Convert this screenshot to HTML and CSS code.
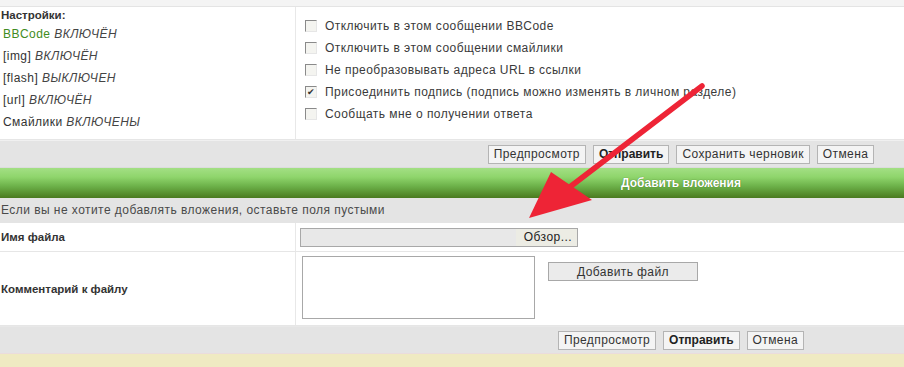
FILE: index.html
```html
<!DOCTYPE html>
<html>
<head>
  <title>Ответить</title>
  <link rel="stylesheet" href="styles.css">
</head>
<body>
  <div class="page">
    <div class="top-strip"></div>

    <div class="row settings-row">
      <div class="cell-left">
        <div class="settings-title">Настройки:</div>
        <div class="settings-line"><span class="green">BBCode</span> <i>ВКЛЮЧЁН</i></div>
        <div class="settings-line">[img] <i>ВКЛЮЧЁН</i></div>
        <div class="settings-line">[flash] <i>ВЫКЛЮЧЕН</i></div>
        <div class="settings-line">[url] <i>ВКЛЮЧЁН</i></div>
        <div class="settings-line">Смайлики <i>ВКЛЮЧЕНЫ</i></div>
      </div>
      <div class="cell-right options">
        <label class="option"><span class="check"></span>Отключить в этом сообщении BBCode</label>
        <label class="option"><span class="check"></span>Отключить в этом сообщении смайлики</label>
        <label class="option"><span class="check"></span>Не преобразовывать адреса URL в ссылки</label>
        <label class="option"><span class="check checked">&#10004;</span>Присоединить подпись (подпись можно изменять в личном разделе)</label>
        <label class="option"><span class="check"></span>Сообщать мне о получении ответа</label>
      </div>
    </div>

    <div class="bar">
      <button class="btn">Предпросмотр</button>
      <button class="btn btn-main">Отправить</button>
      <button class="btn">Сохранить черновик</button>
      <button class="btn">Отмена</button>
    </div>

    <div class="cat-head">Добавить вложения</div>

    <div class="info">Если вы не хотите добавлять вложения, оставьте поля пустыми</div>

    <div class="row file-row">
      <div class="cell-left label">Имя файла</div>
      <div class="cell-right">
        <div class="file-input"><span class="file-path"></span><span class="file-browse">Обзор...</span></div>
      </div>
    </div>

    <div class="row comment-row">
      <div class="cell-left label">Комментарий к файлу</div>
      <div class="cell-right comment-cell">
        <textarea class="comment"></textarea>
        <button class="btn btn-add">Добавить файл</button>
      </div>
    </div>

    <div class="bar bar-bottom">
      <button class="btn">Предпросмотр</button>
      <button class="btn btn-main">Отправить</button>
      <button class="btn">Отмена</button>
    </div>

    <div class="bottom-strip"></div>
  </div>

  <svg class="arrow" width="904" height="367" viewBox="0 0 904 367">
    <line x1="702" y1="86" x2="562" y2="193" stroke="#ee2436" stroke-width="5.5" stroke-linecap="round"/>
    <polygon points="529,218 551,172 592,200" fill="#ee2436"/>
  </svg>
</body>
</html>
```

FILE: styles.css
```css
html, body {
  margin: 0;
  overflow: hidden;
}
body {
  font-family: "Liberation Sans", Arial, sans-serif;
  font-size: 12px;
  letter-spacing: 0.45px;
  color: #333;
  background: #fff;
  position: relative;
}
.page {
  width: 1362px;
}
.top-strip {
  height: 6px;
  background: #f4f4f4;
  border-bottom: 1px solid #e4e4e4;
}
.row {
  display: flex;
  border-bottom: 1px solid #e6e6e6;
}
.cell-left {
  width: 296px;
  border-right: 1px solid #e8e8e8;
  box-sizing: border-box;
}
.cell-right {
  flex: 1;
  padding-left: 4px;
}

/* settings */
.settings-row {
  height: 132px;
}
.settings-title {
  font-weight: bold;
  letter-spacing: 0;
  font-size: 11.5px;
  line-height: 16px;
  padding-left: 1px;
}
.settings-line {
  line-height: 22px;
  padding-left: 3px;
}
.settings-line i {
  color: #444;
}
.green {
  color: #3f8c22;
}
.options {
  padding-top: 8px;
  padding-left: 9px;
}
.option {
  display: flex;
  align-items: center;
  height: 22px;
  color: #3a3a3a;
}
.check {
  width: 10px;
  height: 10px;
  margin-right: 8px;
  border-top: 1px solid #8a8a8a;
  border-left: 1px solid #8a8a8a;
  border-right: 1px solid #e6e6e6;
  border-bottom: 1px solid #e6e6e6;
  background: #f4f4f0;
  font-size: 9px;
  letter-spacing: 0;
  line-height: 10px;
  text-align: center;
  color: #333;
}

/* button bars */
.bar {
  height: 26px;
  background: #e4e4e4;
  border-top: 1px solid #f0f0f0;
  display: flex;
  justify-content: center;
  align-items: center;
  gap: 7px;
}
.btn {
  font-family: "Liberation Sans", Arial, sans-serif;
  font-size: 12px;
  letter-spacing: 0.4px;
  color: #333;
  height: 19px;
  padding: 0 5px;
  background: #f4f4f4;
  border: 1px solid #b4b4b4;
  border-radius: 0;
}
.btn-main {
  font-weight: bold;
  letter-spacing: 0;
  color: #222;
}
.bar-bottom {
  border-top: 1px solid #e8e8e8;
}

/* category header */
.cat-head {
  height: 30px;
  line-height: 30px;
  text-align: center;
  color: #fff;
  font-weight: bold;
  letter-spacing: 0;
  text-shadow: 0 0 1px #3d6a1a;
  background: linear-gradient(#a3df84 0%, #8fd56c 30%, #6db24a 60%, #4a7a1f 100%);
  border-top: 1px solid #dcdcdc;
}
.info {
  height: 25px;
  line-height: 25px;
  background: #e4e4e4;
  color: #4a4a4a;
  padding-left: 1px;
}

/* attachment rows */
.label {
  font-weight: bold;
  letter-spacing: 0;
  font-size: 11.5px;
  display: flex;
  align-items: center;
  padding-left: 1px;
}
.file-row {
  height: 28px;
  align-items: stretch;
}
.file-row .cell-right {
  display: flex;
  align-items: center;
}
.file-input {
  width: 276px;
  height: 17px;
  border: 1px solid #a8a8a8;
  background: #e8e8e8;
  display: flex;
  align-items: center;
}
.file-path {
  flex: 1;
}
.file-browse {
  padding: 0 5px 0 8px;
  line-height: 17px;
  background: #ecece4;
  color: #222;
}
.comment-row {
  height: 73px;
}
.comment-cell {
  display: flex;
  align-items: flex-start;
  padding-left: 6px;
  padding-top: 4px;
}
.comment {
  width: 233px;
  height: 63px;
  box-sizing: border-box;
  border: 1px solid #a8a8a8;
  resize: none;
  margin: 0;
}
.btn-add {
  width: 150px;
  margin-left: 13px;
  margin-top: 6px;
  background: #ebebeb;
  border-color: #a8a8a8;
}
.bottom-strip {
  height: 15px;
  background: #efeac2;
  border-top: 1px solid #eadcdc;
}

.arrow {
  position: absolute;
  left: 0;
  top: 0;
  pointer-events: none;
}
```
